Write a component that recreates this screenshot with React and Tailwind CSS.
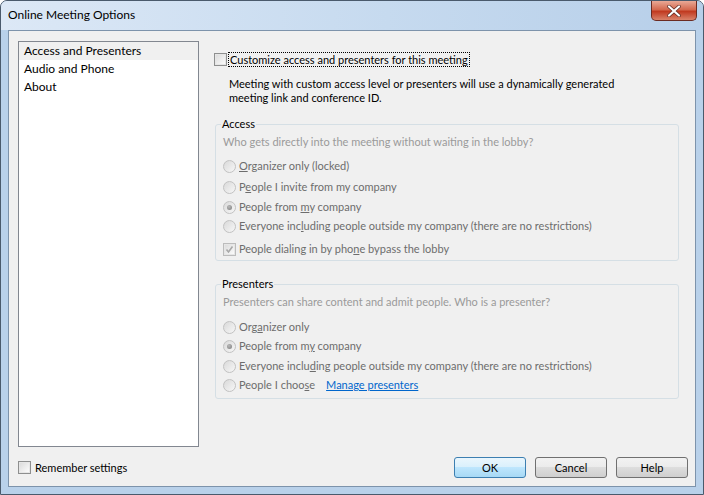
import React from 'react';

function Radio({ checked }) {
  return (
    <span className="flex h-[13px] w-[13px] shrink-0 items-center justify-center rounded-full border border-[#c2c2c2] bg-[linear-gradient(135deg,#d9d9d9,#f7f7f7)]">
      {checked && <span className="h-[5px] w-[5px] rounded-full bg-[radial-gradient(circle_at_40%_35%,#b8b8b8,#7d7d7d)]" />}
    </span>
  );
}

function Check({ checked, disabled }) {
  return (
    <span className={`flex h-[13px] w-[13px] shrink-0 items-center justify-center border ${disabled ? 'border-[#bcbcbc]' : 'border-[#8e8f8f]'} bg-white`}>
      <span className="flex h-[11px] w-[11px] items-center justify-center border border-[#e6e6e6] bg-[linear-gradient(135deg,#dcdcdc,#fbfbfb)]">
        {checked && (
          <svg width="9" height="9" viewBox="0 0 9 9">
            <path d="M1.5 4.5 L3.5 7 L7.5 1.5" fill="none" stroke="#a8a8a8" strokeWidth="1.6" />
          </svg>
        )}
      </span>
    </span>
  );
}

function Option({ checked, children, className = '' }) {
  return (
    <div className={`flex items-center gap-[3px] pl-[7px] ${className}`}>
      <Radio checked={checked} />
      <span className="text-[#6d6d6d]">{children}</span>
    </div>
  );
}

function Button({ children, primary }) {
  return (
    <button
      className={`h-[21px] w-[72px] rounded-[3px] border text-black ${
        primary
          ? 'border-[#3c7fb1] bg-[linear-gradient(#eaf6fd,#d9f0fc_50%,#bee6fd_50%,#a7d9f5)]'
          : 'border-[#707070] bg-[linear-gradient(#f2f2f2,#ebebeb_50%,#dddddd_50%,#cfcfcf)]'
      }`}
    >
      {children}
    </button>
  );
}

export default function App() {
  return (
    <div className="flex h-[495px] w-[704px] flex-col rounded-t-[7px] border border-[#4a5a6c] bg-[#b9d1ea] font-['Lato',sans-serif] text-[11px] leading-[16px] text-black">
      {/* Title bar */}
      <div className="flex h-[29px] shrink-0 items-start rounded-t-[6px] bg-[linear-gradient(to_right,#dce8f6,#c6daef_55%,#b7cfe9)]">
        <span className="mt-[6px] ml-[7px] text-[12px] text-black">Online Meeting Options</span>
        <div className="mr-[6px] ml-auto flex h-[20px] w-[46px] items-center justify-center rounded-b-[5px] border border-t-0 border-[#6b2b22] bg-[linear-gradient(#e9a996,#d4694f_45%,#c13a20_55%,#d9826a)]">
          <svg width="14" height="12" viewBox="0 0 14 12">
            <path d="M2 1.5 L12 10.5 M12 1.5 L2 10.5" stroke="#5a2a22" strokeWidth="3.6" strokeLinecap="round" />
            <path d="M2 1.5 L12 10.5 M12 1.5 L2 10.5" stroke="#ffffff" strokeWidth="2.2" strokeLinecap="round" />
          </svg>
        </div>
      </div>

      {/* Client area */}
      <div className="mx-[7px] flex flex-1 flex-col border border-[#7d93ab] bg-[#f0f0f0] pt-[10px] pr-[7px] pb-[8px] pl-[9px]">
        <div className="flex">
          <div className="h-[406px] w-[181px] shrink-0 border border-[#828790] bg-white text-[12px]">
            <div className="flex h-[18px] items-center bg-[#f0f0f0] pl-[5px]">Access and Presenters</div>
            <div className="flex h-[18px] items-center pl-[5px]">Audio and Phone</div>
            <div className="flex h-[18px] items-center pl-[5px]">About</div>
          </div>

          <div className="ml-[15px] w-[465px]">
            <div className="mt-[11px] flex items-center gap-[1px]">
              <Check />
              <span className="border border-dotted border-black px-[1px] leading-[13px]">
                Customize access and presenters for this meeting
              </span>
            </div>
            <p className="mt-[10px] pl-[15px] leading-[14px]">
              Meeting with custom access level or presenters will use a dynamically generated
              <br />
              meeting link and conference ID.
            </p>

            <fieldset className="mt-[11px] ml-[1px] h-[145px] rounded-[3px] border border-[#d5dfe5]">
              <legend className="ml-[5px] px-[1px] leading-[16px]">Access</legend>
              <div className="mt-[2px] pl-[7px] text-[#9a9a9a]">Who gets directly into the meeting without waiting in the lobby?</div>
              <Option className="mt-[8px]">
                <span className="underline">O</span>rganizer only (locked)
              </Option>
              <Option className="mt-[5px]">
                P<span className="underline">e</span>ople I invite from my company
              </Option>
              <Option checked className="mt-[4px]">
                People from <span className="underline">m</span>y company
              </Option>
              <Option className="mt-[3px]">
                Everyone inc<span className="underline">l</span>uding people outside my company (there are no restrictions)
              </Option>
              <div className="mt-[7px] flex items-center gap-[3px] pl-[7px]">
                <Check checked disabled />
                <span className="text-[#6d6d6d]">
                  People dialing in by pho<span className="underline">n</span>e bypass the lobby
                </span>
              </div>
            </fieldset>

            <fieldset className="mt-[15px] ml-[1px] h-[123px] rounded-[3px] border border-[#d5dfe5]">
              <legend className="ml-[5px] px-[1px] leading-[16px]">Presenters</legend>
              <div className="mt-[2px] pl-[7px] text-[#9a9a9a]">Presenters can share content and admit people. Who is a presenter?</div>
              <Option className="mt-[9px]">
                Org<span className="underline">a</span>nizer only
              </Option>
              <Option checked className="mt-[3px]">
                People from m<span className="underline">y</span> company
              </Option>
              <Option className="mt-[4px]">
                Everyone inclu<span className="underline">d</span>ing people outside my company (there are no restrictions)
              </Option>
              <Option className="mt-[3px]">
                People I choo<span className="underline">s</span>e
                <span className="ml-[11px] text-[#0066cc] underline">Manage presenters</span>
              </Option>
            </fieldset>
          </div>
        </div>

        <div className="mt-auto flex items-center">
          <Check />
          <span className="ml-[4px]">Remember settings</span>
          <div className="ml-auto flex gap-[9px]">
            <Button primary>OK</Button>
            <Button>Cancel</Button>
            <Button>Help</Button>
          </div>
        </div>
      </div>
      <div className="h-[7px] shrink-0" />
    </div>
  );
}
